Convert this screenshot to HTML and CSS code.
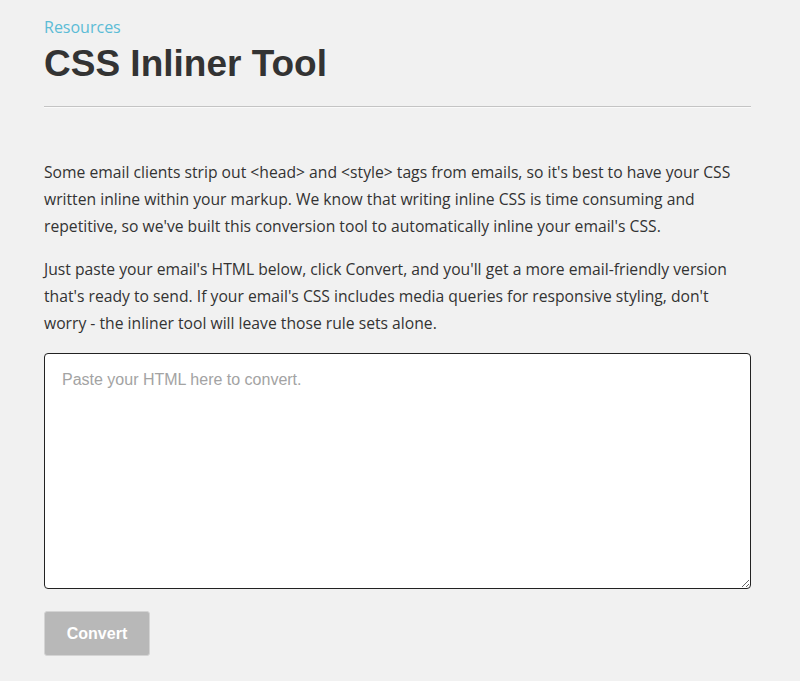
FILE: index.html
```html
<!DOCTYPE html>
<html lang="en">
<head>
    <meta charset="UTF-8">
    <meta name="viewport" content="width=device-width, initial-scale=1.0">
    <title>CSS Inliner Tool</title>
    <link rel="stylesheet" href="styles.css">
</head>
<body>
    <div class="container">
        <div class="page-header">
            <a class="crumb" href="#">Resources</a>
            <h1>CSS Inliner Tool</h1>
        </div>
        <div class="intro">
            <p>Some email clients strip out &lt;head&gt; and &lt;style&gt; tags from emails, so it's best to have your CSS written inline within your markup. We know that writing inline CSS is time consuming and repetitive, so we've built this conversion tool to automatically inline your email's CSS.</p>
            <p>Just paste your email's HTML below, click Convert, and you'll get a more email-friendly version that's ready to send. If your email's CSS includes media queries for responsive styling, don't worry - the inliner tool will leave those rule sets alone.</p>
        </div>
        <form id="inlinerForm">
            <textarea id="source" name="html" placeholder="Paste your HTML here to convert." autofocus></textarea>
            <button type="submit" disabled>Convert</button>
        </form>
    </div>
</body>
</html>
```

FILE: styles.css
```css
body {
    font-family: "Open Sans", sans-serif;
    background-color: #f1f1f1;
    color: #333;
    margin: 0;
    padding: 0;
}
.container {
    width: 707px;
    margin-left: 44px;
}
.page-header {
    padding-top: 15px;
    padding-bottom: 19px;
    border-bottom: 1px solid #c4c4c4;
    box-shadow: 0 1px 0 #fafafa;
}
.crumb {
    display: block;
    color: #5bbcd6;
    font-size: 16px;
    line-height: 24px;
    text-decoration: none;
}
h1 {
    font-family: "Liberation Sans", Arial, sans-serif;
    font-size: 37px;
    font-weight: bold;
    line-height: 46px;
    margin: 2px 0 0;
    color: #333;
}
.intro {
    padding-top: 52px;
}
.intro p {
    font-size: 15.7px;
    line-height: 27px;
    margin: 0 0 16px;
}
textarea {
    display: block;
    box-sizing: border-box;
    width: 707px;
    height: 236px;
    margin-top: 16px;
    padding: 16px 17px;
    border: 1px solid #222;
    border-radius: 4px;
    background-color: #fff;
    font-family: "Liberation Sans", Arial, sans-serif;
    font-size: 16px;
    line-height: 20px;
    color: #333;
    outline: none;
}
textarea::placeholder {
    color: #a3a3a3;
}
button {
    display: block;
    width: 106px;
    height: 45px;
    margin-top: 22px;
    background-color: #b8b8b8;
    color: #fff;
    border: 1px solid #d4d4d4;
    border-radius: 3px;
    font-family: "Liberation Sans", Arial, sans-serif;
    font-size: 16px;
    font-weight: bold;
    cursor: pointer;
}
```
